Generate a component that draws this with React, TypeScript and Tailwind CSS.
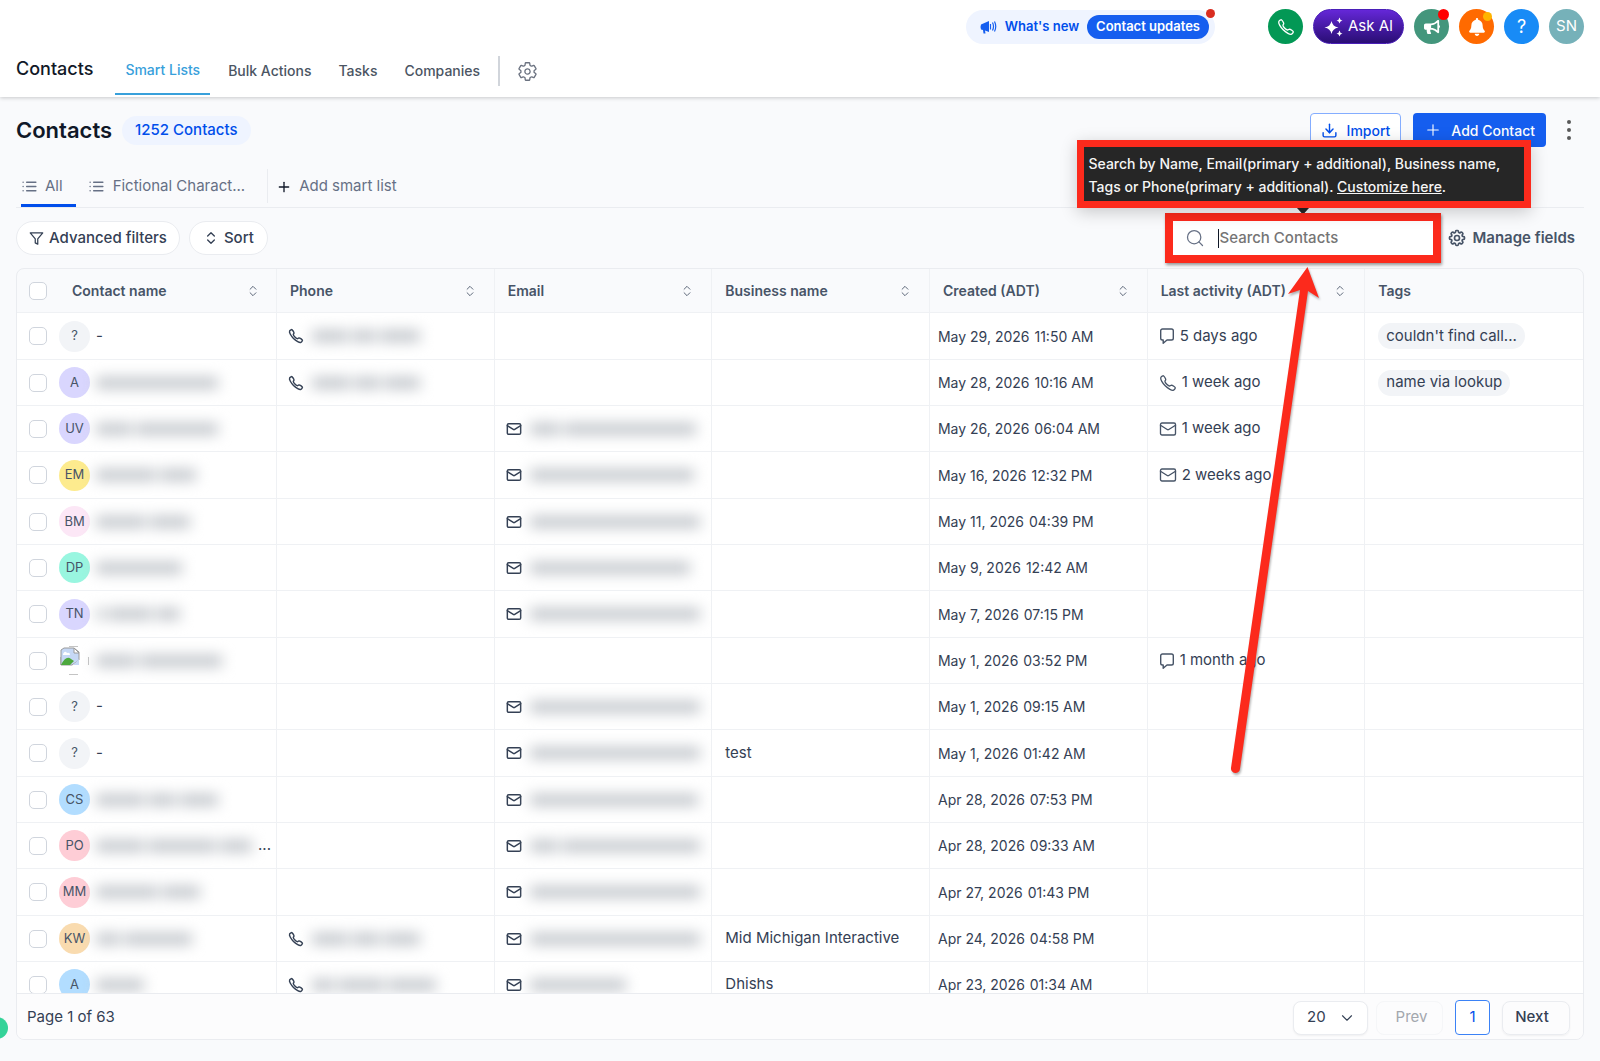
import { LuChevronDown, LuChevronsUpDown, LuFilter, LuList, LuMail, LuPlus, LuSearch } from 'react-icons/lu';
import { HiOutlineCog8Tooth } from 'react-icons/hi2';
import { IoCallOutline, IoSettingsOutline } from 'react-icons/io5';
import { FaBell, FaBullhorn } from 'react-icons/fa';
import { FiDownload } from 'react-icons/fi';

type Activity = { kind: 'chat' | 'call' | 'mail'; text: string };

type Contact = {
  initials: string;
  color: string;
  name: number[]; // widths of the redacted words
  truncated?: boolean;
  phone?: number[];
  email?: number[];
  business?: string;
  date: string;
  time: string;
  activity?: Activity;
  tag?: string;
};

const contacts: Contact[] = [
  { initials: '?', color: 'bg-[#f2f4f7]', name: [], phone: [36, 24, 40], date: 'May 29, 2026', time: '11:50 AM', activity: { kind: 'chat', text: '5 days ago' }, tag: "couldn't find call..." },
  { initials: 'A', color: 'bg-[#d9d6fe]', name: [122], phone: [38, 26, 36], date: 'May 28, 2026', time: '10:16 AM', activity: { kind: 'call', text: '1 week ago' }, tag: 'name via lookup' },
  { initials: 'UV', color: 'bg-[#d9d6fe]', name: [36, 82], email: [30, 132], date: 'May 26, 2026', time: '06:04 AM', activity: { kind: 'mail', text: '1 week ago' } },
  { initials: 'EM', color: 'bg-[#fdeb8e]', name: [60, 36], email: [164], date: 'May 16, 2026', time: '12:32 PM', activity: { kind: 'mail', text: '2 weeks ago' } },
  { initials: 'BM', color: 'bg-[#fce7f6]', name: [50, 40], email: [170], date: 'May 11, 2026', time: '04:39 PM' },
  { initials: 'DP', color: 'bg-[#99f6e0]', name: [86], email: [160], date: 'May 9, 2026', time: '12:42 AM' },
  { initials: 'TN', color: 'bg-[#d9d6fe]', name: [8, 44, 24], email: [170], date: 'May 7, 2026', time: '07:15 PM' },
  { initials: '', color: '', name: [40, 82], date: 'May 1, 2026', time: '03:52 PM', activity: { kind: 'chat', text: '1 month ago' } },
  { initials: '?', color: 'bg-[#f2f4f7]', name: [], email: [170], date: 'May 1, 2026', time: '09:15 AM' },
  { initials: '?', color: 'bg-[#f2f4f7]', name: [], email: [170], business: 'test', date: 'May 1, 2026', time: '01:42 AM' },
  { initials: 'CS', color: 'bg-[#b2ddff]', name: [48, 28, 38], email: [168], date: 'Apr 28, 2026', time: '07:53 PM' },
  { initials: 'PO', color: 'bg-[#fecdd6]', name: [48, 68, 32], truncated: true, email: [28, 138], date: 'Apr 28, 2026', time: '09:33 AM' },
  { initials: 'MM', color: 'bg-[#fecdd6]', name: [62, 38], email: [170], date: 'Apr 27, 2026', time: '01:43 PM' },
  { initials: 'KW', color: 'bg-[#f9dbaf]', name: [24, 68], phone: [36, 28, 36], email: [170], business: 'Mid Michigan Interactive', date: 'Apr 24, 2026', time: '04:58 PM' },
  { initials: 'A', color: 'bg-[#b2ddff]', name: [48], phone: [22, 46, 48], email: [96], business: 'Dhishs', date: 'Apr 23, 2026', time: '01:34 AM' },
];

const columns = ['Phone', 'Email', 'Business name', 'Created (ADT)', 'Last activity (ADT)'];

function Redacted({ words }: { words: number[] }) {
  return (
    <span className="flex gap-1 blur-[7px]" aria-hidden="true">
      {words.map((width, i) => (
        <span key={i} className="h-3 bg-[#c3c7cc]" style={{ width }}></span>
      ))}
    </span>
  );
}

function BrokenImage() {
  return (
    <svg width="31" height="31" viewBox="0 0 31 31" className="shrink-0">
      <path d="M10 1.500h9M29.500 12v8M10 29.500h9M1.500 12v8" stroke="#c4c4c4" fill="none" />
      <path d="M2 5l3-2h10l5 4v8L13 20H2z" fill="#c6d8f5" stroke="#9a9a9a" />
      <path d="M4 9q2-4 4-1q3-1 3 2H4z" fill="#fff" />
      <path d="M15 3v5h5z" fill="#fff" stroke="#9a9a9a" />
      <path d="M2 20q5-10 10-6l3 2-4 4z" fill="#4ca83d" />
      <path d="M20 14v6h-6z" fill="#c6d8f5" />
    </svg>
  );
}

function ChatIcon() {
  return (
    <svg width="16" height="18" viewBox="0 0 16 18" fill="none" stroke="#475467" strokeWidth="1.400" strokeLinejoin="round">
      <path d="M3.500 2h9A1.800 1.800 0 0 1 14.300 3.800v7.400A1.800 1.800 0 0 1 12.500 13H8L4.200 16.300V13H3.500A1.800 1.800 0 0 1 1.700 11.200V3.800A1.800 1.800 0 0 1 3.500 2z" />
    </svg>
  );
}

function ActivityIcon({ kind }: { kind: Activity['kind'] }) {
  if (kind === 'chat') return <ChatIcon />;
  if (kind === 'call') return <IoCallOutline size={18} className="text-[#475467] [&_path]:stroke-[38px]" />;
  return <LuMail size={18} strokeWidth={1.8} className="text-[#475467]" />;
}

function Checkbox({ label }: { label: string }) {
  return (
    <input
      type="checkbox"
      aria-label={label}
      className="block h-[18px] w-[18px] shrink-0 appearance-none rounded-[5px] border border-[#d0d5dd] bg-white"
    />
  );
}

function TopBar() {
  return (
    <div className="flex items-center justify-end px-4 pt-[9px] pb-[9px]">
      <div className="relative mr-[53px] flex h-[34px] items-center rounded-full bg-[#eff4ff] pr-[6px] pl-[14px] text-[13px] font-semibold">
        <svg width="17" height="16" viewBox="0 0 17 16" fill="#155eef">
          <path d="M1 5.500l8-3.500v11l-4-1.500.5 3H3.500L3 11 1 10.500q-1-2.500 0-5z" />
          <path d="M10.500 5v5.500M12.500 3.500q2 4 0 8M14.500 2.500q2.500 5 0 10" fill="none" stroke="#155eef" strokeWidth="1.200" />
        </svg>
        <span className="ml-2 text-[#004eeb]">What's new</span>
        <button className="ml-2 h-6 rounded-full bg-[#155eef] px-[9px] text-white">Contact updates</button>
        <span className="absolute top-[-1px] right-0 h-[9px] w-[9px] rounded-full bg-[#d92d20]"></span>
      </div>

      <div className="flex items-center gap-[10px] text-white">
        <button aria-label="Call" className="flex h-[35px] w-[35px] items-center justify-center rounded-full bg-[#039855]">
          <IoCallOutline size={18} className="[&_path]:stroke-[38px]" />
        </button>
        <button className="flex h-[35px] w-[91px] items-center justify-center gap-1 rounded-full border border-[#4a1fb8] bg-linear-to-b from-[#6527d8] to-[#2a0e75] text-[15px]">
          <svg width="20" height="20" viewBox="0 0 20 20" fill="currentColor">
            <path d="M7.500 4q1 5.500 7 6.500-6 1-7 6.500-1-5.500-7-6.500 6-1 7-6.500z" />
            <path d="M15.500 0.500q.4 2.600 3 3-2.600.4-3 3-.4-2.600-3-3 2.600-.4 3-3zM15.500 13.500q.4 2.600 3 3-2.600.4-3 3-.4-2.600-3-3 2.600-.4 3-3z" />
          </svg>
          Ask AI
        </button>
        <button aria-label="Announcements" className="relative flex h-[35px] w-[35px] items-center justify-center rounded-full bg-[#43967c]">
          <FaBullhorn size={16} />
          <span className="absolute top-0 right-0 h-[11px] w-[11px] rounded-full bg-[#ff0000]"></span>
        </button>
        <button aria-label="Notifications" className="relative flex h-[35px] w-[35px] items-center justify-center rounded-full bg-[#ff6a00]">
          <FaBell size={18} />
          <span className="absolute top-[3px] right-[2px] h-[9px] w-[9px] rounded-full bg-[#ffb400]"></span>
        </button>
        <button aria-label="Help" className="h-[35px] w-[35px] rounded-full bg-[#188bf6] text-[18px]">?</button>
        <button className="h-[35px] w-[35px] rounded-full bg-[#76b1b9] text-[15px]">SN</button>
      </div>
    </div>
  );
}

function Nav() {
  return (
    <nav className="flex h-[42px] text-[14px] font-medium text-[#4b5563]">
      <span className="mr-[22px] ml-4 flex items-center pb-3 text-[18px] text-[#111827]">Contacts</span>
      <a href="#lists" className="flex items-center border-b-2 border-[#38a0db] px-[10px] pb-2 text-[#38a0db]">Smart Lists</a>
      <a href="#bulk" className="ml-[18px] flex items-center pb-2">Bulk Actions</a>
      <a href="#tasks" className="ml-[27px] flex items-center pb-2">Tasks</a>
      <a href="#companies" className="ml-[27px] flex items-center pb-2">Companies</a>
      <span className="mt-[3px] ml-[18px] h-[30px] w-[2px] bg-[#d1d5db]"></span>
      <button aria-label="Settings" className="ml-[17px] flex items-center pb-[6px] text-[#6b7280]">
        <IoSettingsOutline size={21} />
      </button>
    </nav>
  );
}

function SearchBox() {
  return (
    <div className="relative w-[260px]">
      <label className="flex h-[34px] items-center bg-white pl-3">
        <LuSearch size={20} strokeWidth={1.5} className="text-[#667085]" />
        <span className="ml-[13px] h-[19px] w-px bg-[#101828]"></span>
        <input aria-label="Search Contacts" placeholder="Search Contacts" className="min-w-0 flex-1 text-[15px] outline-none placeholder:text-[#757575]" />
      </label>
      <div className="pointer-events-none absolute inset-[-8px] border-8 border-[#fc2a1c] shadow-[1px_2px_3px_rgba(0,0,0,0.4)]"></div>

      <div role="tooltip" className="absolute top-[-81px] left-[-96px] z-10 w-[454px] border-[7px] border-[#fc2a1c] bg-[#262626] px-1 pt-[5px] pb-[3px] text-[14px] leading-[23px] whitespace-nowrap text-[#f5f5f5] shadow-[0_4px_16px_rgba(0,0,0,0.2)]">
        Search by Name, Email(primary + additional), Business name,
        <br />
        Tags or Phone(primary + additional). <a href="#customize" className="underline">Customize here</a>.
      </div>
      <svg width="12" height="5" viewBox="0 0 12 5" className="absolute top-[-13px] left-[124px]">
        <path d="M0 0h12L7.500 5h-3z" fill="#262626" />
      </svg>

      <svg width="100" height="520" viewBox="0 0 100 520" className="pointer-events-none absolute top-[46px] left-[55px] z-10 drop-shadow-[1px_2px_1px_rgba(0,0,0,0.3)]" fill="#fc2a1c">
        <path d="M79.500 0L91 31l-11-7L12 502a4.500 4.500 0 0 1-9-1L72 23l-12 4z" />
      </svg>
    </div>
  );
}

function ContactsTable() {
  return (
    <table className="w-full table-fixed border-separate border-spacing-0 text-left text-[#344054]">
      <thead>
        <tr className="h-11 text-[14px] text-[#475467]">
          <th className="w-[260px] border-r border-b border-[#eff1f4] px-3 font-semibold">
            <div className="flex items-center">
              <Checkbox label="Select all" />
              <span className="ml-[25px]">Contact name</span>
              <LuChevronsUpDown size={14} strokeWidth={1.5} className="mr-1 ml-auto" />
            </div>
          </th>
          {columns.map((column) => (
            <th key={column} className="border-r border-b border-[#eff1f4] px-[13px] font-semibold">
              <div className="flex items-center justify-between">
                {column}
                <LuChevronsUpDown size={14} strokeWidth={1.5} className="mr-1" />
              </div>
            </th>
          ))}
          <th className="border-b border-[#eff1f4] px-[13px] font-semibold">Tags</th>
        </tr>
      </thead>
      <tbody className="bg-white text-[15px] [&_td]:border-b [&_td]:border-[#eff1f4] [&_td:not(:last-child)]:border-r">
        {contacts.map((c, i) => (
          <tr key={i} className="h-[46px] nth-[3n+1]:h-[47px]">
            <td className="pl-3">
              <div className="flex items-center">
                <Checkbox label={`Select row ${i + 1}`} />
                <span className="ml-3 flex items-center">
                  {c.initials ? (
                    <span className={`flex h-[31px] w-[31px] items-center justify-center rounded-full text-[13px] text-[#475467] ${c.color}`}>{c.initials}</span>
                  ) : (
                    <BrokenImage />
                  )}
                </span>
                <span className="ml-[6px] flex items-center">
                  {c.name.length ? <Redacted words={c.name} /> : '-'}
                  {c.truncated && <span className="ml-[6px]">...</span>}
                </span>
              </div>
            </td>
            <td className="pl-[11px]">
              {c.phone && (
                <div className="flex items-center gap-2">
                  <IoCallOutline size={16} className="shrink-0 [&_path]:stroke-[46px]" />
                  <Redacted words={c.phone} />
                </div>
              )}
            </td>
            <td className="overflow-hidden pl-[11px]">
              {c.email && (
                <div className="flex items-center gap-2">
                  <LuMail size={16} strokeWidth={2.2} className="shrink-0" />
                  <Redacted words={c.email} />
                </div>
              )}
            </td>
            <td className="pl-[13px]">{c.business}</td>
            <td className="pl-2 text-[14px]">
              {c.date} <span className="ml-px">{c.time}</span>
            </td>
            <td className="pl-[11px]">
              {c.activity && (
                <div className="flex items-center gap-[5px]">
                  <ActivityIcon kind={c.activity.kind} />
                  {c.activity.text}
                </div>
              )}
            </td>
            <td className="pl-[13px]">
              {c.tag && <span className="flex h-[26px] w-fit items-center rounded-full bg-[#f2f4f7] px-2">{c.tag}</span>}
            </td>
          </tr>
        ))}
      </tbody>
    </table>
  );
}

function Pagination() {
  return (
    <div className="flex h-[46px] shrink-0 items-center border-t border-[#eaecf0] bg-[#fcfcfd] pt-[2px] pr-[13px] pl-[10px] text-[15px] text-[#344054]">
      <span>Page 1 of 63</span>
      <div className="relative ml-auto">
        <select aria-label="Page size" className="h-[34px] w-[75px] appearance-none rounded-lg border border-[#eaecf0] bg-white pl-[13px] shadow-xs">
          <option>20</option>
        </select>
        <LuChevronDown size={18} strokeWidth={1.5} className="pointer-events-none absolute top-2 right-3" />
      </div>
      <button disabled className="ml-2 h-[34px] w-[67px] rounded-lg border border-[#f5f6f8] pl-1 text-[#a3a7ae]">Prev</button>
      <button className="ml-3 h-[35px] w-[35px] rounded-[4px] border border-[#3b82f6] bg-white text-[#004eeb]">1</button>
      <button className="ml-3 h-[34px] w-[68px] rounded-lg border border-[#eaecf0] pr-2 font-medium shadow-xs">Next</button>
    </div>
  );
}

export default function App() {
  return (
    <div className="relative flex h-screen flex-col overflow-hidden bg-[#f9fafc] font-['Inter',sans-serif]">
      <header className="z-10 bg-white pb-[2px] shadow-[0_1px_4px_rgba(0,0,0,0.2)]">
        <TopBar />
        <Nav />
      </header>

      <main className="flex min-h-0 flex-1 flex-col px-4 pt-4 pb-[21px]">
        <div className="flex h-[34px] items-center">
          <h1 className="text-[22px] font-semibold text-[#101828]">Contacts</h1>
          <span className="ml-[10px] flex h-[29px] items-center rounded-full bg-[#eff4ff] px-[13px] text-[15px] font-medium text-[#004eeb]">1252 Contacts</span>
          <button className="ml-auto flex h-[34px] items-center gap-[9px] rounded-[4px] border border-[#84adff] bg-white px-[10px] text-[14px] font-medium text-[#004eeb]">
            <FiDownload size={17} />
            Import
          </button>
          <button className="ml-3 flex h-[34px] items-center gap-[9px] rounded-[4px] bg-[#155eef] px-[11px] text-[14px] font-medium text-white">
            <LuPlus size={18} strokeWidth={1.5} />
            Add Contact
          </button>
          <button aria-label="More" className="mr-[13px] ml-[21px] flex flex-col gap-1">
            <span className="h-1 w-1 rounded-full bg-[#595959]"></span>
            <span className="h-1 w-1 rounded-full bg-[#595959]"></span>
            <span className="h-1 w-1 rounded-full bg-[#595959]"></span>
          </button>
        </div>

        <div className="mt-[22px] flex h-[39px] border-b border-[#eaecf0] text-[15px] text-[#667085]">
          <button className="ml-[5px] flex items-center gap-[7px] border-b-[3px] border-[#004eeb] pr-[13px]">
            <LuList size={17} />
            All
          </button>
          <button className="ml-3 flex items-center gap-2 border-b-[3px] border-transparent">
            <LuList size={17} />
            Fictional Charact...
          </button>
          <span className="ml-[22px] h-[34px] w-px bg-[#eaecf0]"></span>
          <button className="ml-2 flex items-center gap-[7px] border-b-[3px] border-transparent">
            <LuPlus size={16} className="text-[#101828]" />
            Add smart list
          </button>
        </div>

        <div className="mt-[13px] flex items-center text-[15px] font-medium text-[#344054]">
          <button className="flex h-[34px] items-center gap-[5px] rounded-full border border-[#eaecf0] bg-white px-3">
            <LuFilter size={15} />
            Advanced filters
          </button>
          <button className="mr-auto ml-[9px] flex h-[34px] items-center gap-[5px] rounded-full border border-[#eaecf0] bg-white px-[13px]">
            <LuChevronsUpDown size={16} />
            Sort
          </button>
          <SearchBox />
          <button className="mr-[9px] ml-[14px] flex items-center gap-[5px] font-semibold text-[#475467]">
            <HiOutlineCog8Tooth size={20} strokeWidth={2} />
            Manage fields
          </button>
        </div>

        <div className="mt-[13px] flex min-h-0 flex-1 flex-col overflow-hidden rounded-lg border border-[#eaecf0]">
          <div className="min-h-0 flex-1 overflow-hidden">
            <ContactsTable />
          </div>
          <Pagination />
        </div>
      </main>

      <span className="absolute bottom-[22px] left-[-14px] h-[22px] w-[22px] rounded-full bg-[#34d399]"></span>
    </div>
  );
}
